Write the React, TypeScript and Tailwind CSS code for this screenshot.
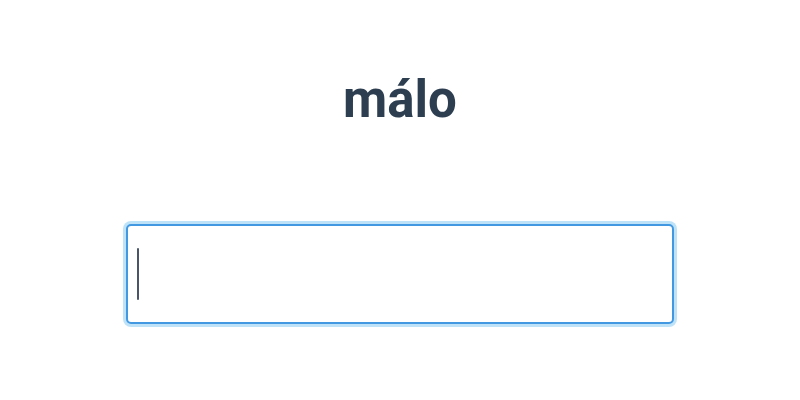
export default function App() {
  return (
    <div className="min-h-screen bg-white flex flex-col items-center pt-[70px] font-['Roboto',sans-serif]">
      <h1 className="text-[51px] leading-[60px] font-bold text-[#2c3e50]">málo</h1>
      <div className="relative mt-[94px]">
        <input
          autoFocus
          type="text"
          className="block w-[548px] h-[100px] px-[9px] text-[44px] text-[#2d3748] caret-[#4a5568] bg-white border-2 border-[#4299e1] rounded-[5px] outline-none ring-[3px] ring-[#bee3f8]"
        />
        {/* caret drawn so it shows in a still frame */}
        <span className="pointer-events-none absolute left-[11px] top-[24px] w-[2px] h-[52px] rounded-[1px] bg-[#4a5568]" />
      </div>
    </div>
  );
}
